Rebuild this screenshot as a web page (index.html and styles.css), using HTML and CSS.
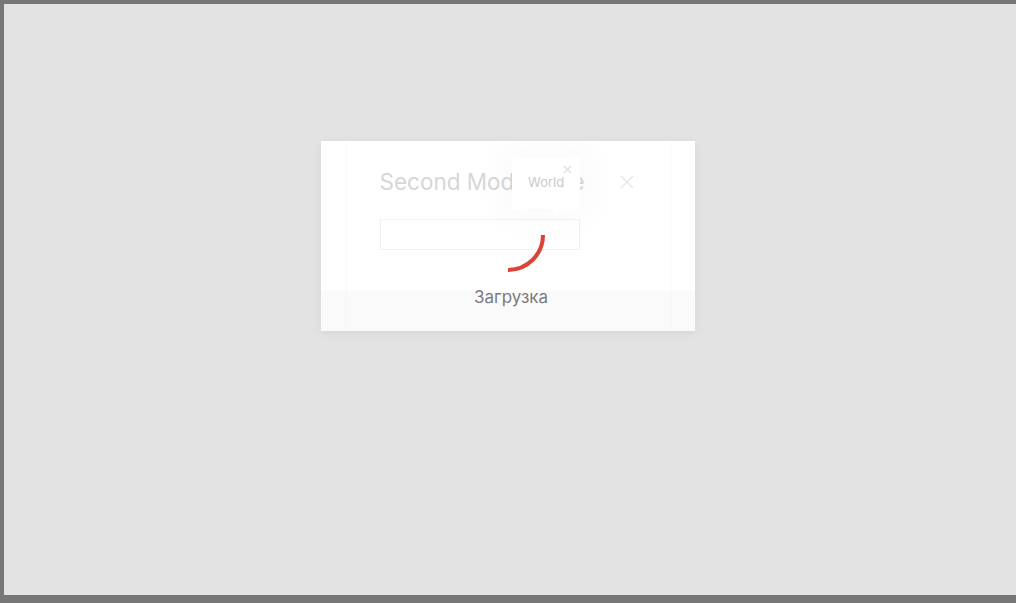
FILE: index.html
```html
<!DOCTYPE html>
<html>
<head>
<meta charset="utf-8">
<link rel="stylesheet" href="styles.css">
</head>
<body>
<div class="screen">
  <div class="modal">
    <div class="dialog">
      <div class="dialog-head">
        <div class="dialog-title">Second Modal Title</div>
        <div class="dialog-close">
          <svg width="14" height="14" viewBox="0 0 14 14"><path d="M1 1L13 13M13 1L1 13" stroke="#e6e6e6" stroke-width="1.4" fill="none"/></svg>
        </div>
      </div>
      <div class="dialog-body">
        <div class="field"></div>
      </div>
      <div class="dialog-foot"></div>
    </div>
    <div class="tooltip">
      <span class="tooltip-text">World</span>
      <svg class="tooltip-close" width="9" height="9" viewBox="0 0 9 9"><path d="M1 1L8 8M8 1L1 8" stroke="#dcdcdc" stroke-width="1.1" fill="none"/></svg>
      <span class="tooltip-arrow"></span>
    </div>
    <div class="loader">
      <svg class="spinner" width="80" height="80" viewBox="0 0 80 80"><path d="M75 38 A35 35 0 0 1 40 73" stroke="#dc4336" stroke-width="4" fill="none"/></svg>
      <div class="loader-text">Загрузка</div>
    </div>
  </div>
</div>
</body>
</html>
```
FILE: styles.css
```css
html, body {
  margin: 0;
  padding: 0;
}
body {
  background: #777777;
  padding: 4px 0 8px 4px;
  font-family: Inter, "Noto Sans", sans-serif;
}
.screen {
  height: 591px;
  background: #e3e3e3;
  display: flex;
  justify-content: center;
  align-items: flex-start;
  padding-right: 4px;
}
.modal {
  position: relative;
  margin-top: 137px;
  width: 374px;
  height: 190px;
  background: #ffffff;
  box-shadow: 0 2px 10px rgba(0,0,0,0.06);
  display: flex;
  justify-content: center;
  overflow: hidden;
}
.dialog {
  width: 323px;
  display: flex;
  flex-direction: column;
  box-shadow: 0 0 3px rgba(0,0,0,0.05);
}
.dialog-head {
  display: flex;
  align-items: center;
  justify-content: space-between;
  padding: 25px 36px 0 33px;
  height: 30px;
}
.dialog-title {
  font-size: 22.5px;
  color: #d6d6d6;
  white-space: nowrap;
}
.dialog-close {
  display: flex;
  margin-top: 2px;
}
.dialog-body {
  padding: 23px 34px 0 33px;
  height: 72px;
}
.field {
  width: 198px;
  height: 29px;
  border: 1px solid #f1f1f1;
}
.dialog-foot {
  flex: 1;
}
.modal::after {
  content: "";
  position: absolute;
  left: 0;
  right: 0;
  bottom: 0;
  height: 40px;
  background: rgba(240,240,240,0.35);
}
.tooltip {
  position: absolute;
  left: 191px;
  top: 16px;
  width: 68px;
  height: 52px;
  background: #ffffff;
  box-shadow: 0 0 30px 14px rgba(0,0,0,0.02);
}
.tooltip-text {
  position: absolute;
  left: 16px;
  top: 17px;
  font-size: 13px;
  color: #cacaca;
}
.tooltip-close {
  position: absolute;
  right: 8px;
  top: 8px;
}
.tooltip-arrow {
  position: absolute;
  left: 38px;
  bottom: -6px;
  width: 0;
  height: 0;
  border-left: 6px solid transparent;
  border-right: 6px solid transparent;
  border-top: 6px solid #ffffff;
}
.loader {
  position: absolute;
  left: 0;
  right: 0;
  top: 56px;
  display: flex;
  flex-direction: column;
  align-items: center;
  z-index: 2;
}
.loader-text {
  margin-top: 10px;
  padding-left: 6px;
  font-size: 17px;
  color: #7b7b7b;
}
```
